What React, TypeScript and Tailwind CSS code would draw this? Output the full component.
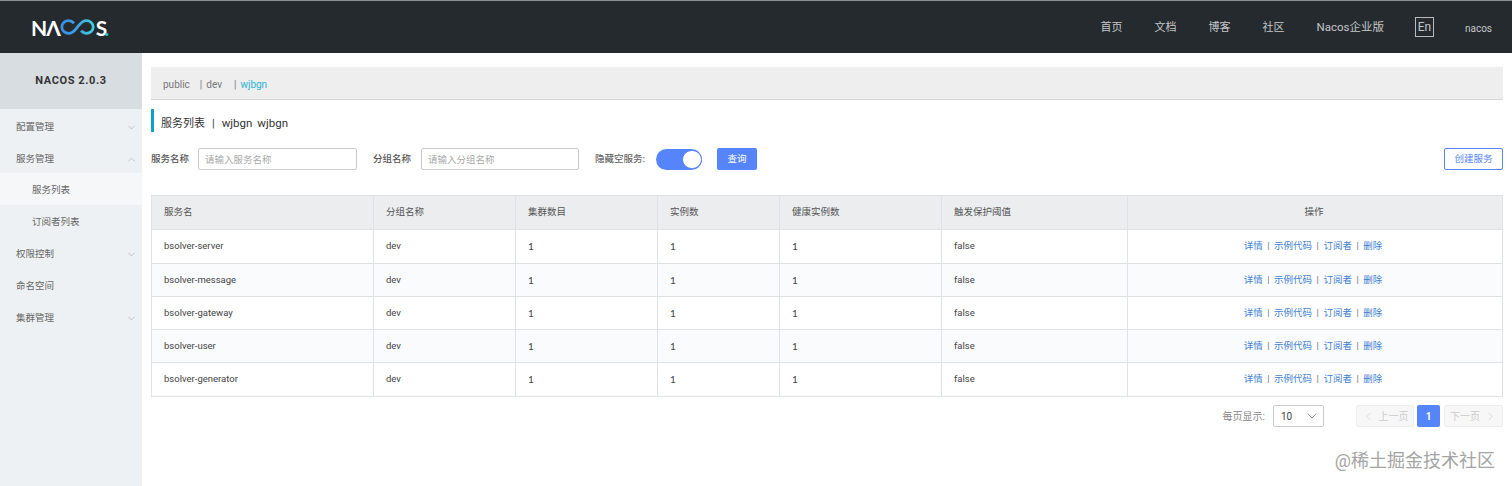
import React from "react";
import { ChevronDown, ChevronUp, ChevronLeft, ChevronRight } from "lucide-react";

const font = "font-['Roboto','Noto_Sans_CJK_SC',sans-serif]";

const rows = ["bsolver-server", "bsolver-message", "bsolver-gateway", "bsolver-user", "bsolver-generator"];
const heights = ["h-[34px]", "h-[33px]", "h-[33px]", "h-[33px]", "h-[34px]"];
const heads = ["服务名", "分组名称", "集群数目", "实例数", "健康实例数", "触发保护阈值"];
const widths = ["w-[222px]", "w-[142px]", "w-[142px]", "w-[122px]", "w-[162px]", "w-[186px]"];

function Logo() {
  return (
    <div className="ml-[31px] flex items-center font-['Lato',sans-serif] text-[21px] leading-none font-bold text-white" aria-label="NACOS.">
      <span className="tracking-[-1px]">NΛ</span>
      <svg width="35" height="16" viewBox="0 0 35 16" fill="none">
        <defs>
          <linearGradient id="inf" x1="0" x2="1">
            <stop offset="0" stopColor="#3a8fe8" />
            <stop offset="0.5" stopColor="#3f9fe6" />
            <stop offset="1" stopColor="#3fd0d8" />
          </linearGradient>
        </defs>
        <path
          d="M14 4.200C12.500 2.600 10.600 1.600 8.600 1.600 4.900 1.600 1.800 4.400 1.800 8s3.100 6.400 6.800 6.400c4.800 0 6.600-4 8.900-6.400S21.600 1.600 26.400 1.600c3.700 0 6.800 2.800 6.800 6.400s-3.100 6.400-6.800 6.400c-2 0-3.900-1-5.400-2.600"
          stroke="url(#inf)"
          strokeWidth="2.8"
        />
      </svg>
      <span className="ml-[1px]">S</span>
      <span className="-ml-[3px] text-[#22c3d6]">.</span>
    </div>
  );
}

function Nav() {
  return (
    <header className="flex h-[53px] items-center justify-between border-t border-[#8b8f93] bg-[#252a2f] pr-5">
      <Logo />
      <nav className="flex items-center text-[11px] text-[#c4c6c8]">
        <span className="mt-[2px] mr-[32px]">首页</span>
        <span className="mt-[2px] mr-[32px]">文档</span>
        <span className="mt-[2px] mr-[32px]">博客</span>
        <span className="mt-[2px] mr-[32px]">社区</span>
        <span className="mt-[2px] mr-[31px] text-[11.5px]">Nacos企业版</span>
        <span className="mr-[31px] flex h-[20px] w-[19px] items-center justify-center border border-[#b9bbbd] text-[12px]">En</span>
        <span className="mt-[2px] text-[10px]">nacos</span>
      </nav>
    </header>
  );
}

function Sidebar() {
  const Item = ({ t, icon, cls = "" }: { t: string; icon?: "down" | "up"; cls?: string }) => (
    <div className={`flex h-8 items-center justify-between pr-[5px] pl-4 text-[9.5px] text-[#666] ${cls}`}>
      <span>{t}</span>
      {icon === "down" && <ChevronDown size={11} strokeWidth={1} className="text-[#888]" />}
      {icon === "up" && <ChevronUp size={11} strokeWidth={1} className="text-[#888]" />}
    </div>
  );
  return (
    <aside className="w-[142px] shrink-0 bg-[#eef1f3]">
      <div className="flex h-[56px] items-center justify-center bg-[#d8dde1] pt-[1px] text-[11px] font-bold tracking-[0.6px] text-[#333]">NACOS 2.0.3</div>
      <Item t="配置管理" icon="down" cls="pt-[4px]" />
      <Item t="服务管理" icon="up" cls="pt-[4px]" />
      <Item t="服务列表" cls="bg-[#f6f7f8] pt-[3px] !pl-[32px]" />
      <Item t="订阅者列表" cls="pt-[2px] !pl-[32px]" />
      <Item t="权限控制" icon="down" cls="mt-[1px]" />
      <Item t="命名空间" />
      <Item t="集群管理" icon="down" />
    </aside>
  );
}

function Table() {
  return (
    <div className="mt-[25px] border border-[#dfe3e6] text-[9.5px] text-[#444]">
      <div className="flex h-[33px] bg-[#ebedef]">
        {heads.map((h, i) => (
          <div key={h} className={`${widths[i]} flex shrink-0 items-center border-r border-[#dfe3e6] pl-[12px] text-[#555]`}>{h}</div>
        ))}
        <div className="flex flex-1 items-center justify-center pr-[2px] text-[#555]">操作</div>
      </div>
      {rows.map((r, idx) => (
        <div key={r} className={`flex ${heights[idx]} border-t border-[#dfe3e6] ${idx % 2 === 1 ? "bg-[#fafbfd]" : "bg-white"}`}>
          {[r, "dev", "1", "1", "1", "false"].map((c, i) => (
            <div key={i} className={`${widths[i]} flex shrink-0 items-center border-r border-[#dfe3e6] pl-[12px] ${c === "1" ? "font-['Lato',sans-serif] text-[10px]" : ""}`}>{c}</div>
          ))}
          <div className="flex flex-1 items-center justify-center gap-[4.5px] pr-[4px] text-[#3f7fd1]">
            <span>详情</span><span className="text-[#777]">|</span><span>示例代码</span><span className="text-[#777]">|</span><span>订阅者</span><span className="text-[#777]">|</span><span>删除</span>
          </div>
        </div>
      ))}
    </div>
  );
}

export default function App() {
  return (
    <div className={`${font} flex h-[486px] w-[1512px] flex-col overflow-hidden bg-white`}>
      <Nav />
      <div className="flex min-h-0 flex-1">
        <Sidebar />
        <main className="relative min-w-0 flex-1 pt-[14px] pr-[9px] pl-[9px]">
          <div className="flex h-[33px] items-center border-b border-[#d6d6d6] bg-[#eeeeee] pt-[3px] pl-3 text-[10px] text-[#777]">
            <span>public</span>
            <span className="ml-[10px]">|</span>
            <span className="ml-[4px]">dev</span>
            <span className="ml-3">|</span>
            <span className="ml-1 text-[#2cb2d0]">wjbgn</span>
          </div>
          <div className="mt-[9px] flex h-[23px] items-center border-l-[3px] border-[#12a3c0] pt-[7px] pl-[7px] text-[11px] text-[#333]">
            <span>服务列表</span>
            <span className="mx-[7px]">|</span>
            <span className="text-[11.5px]">wjbgn</span>
            <span className="ml-[5px] text-[11.5px]">wjbgn</span>
          </div>
          <div className="mt-[16px] flex h-[22px] items-center text-[9.5px]">
            <span className="w-[47px] font-medium text-[#555]">服务名称</span>
            <input readOnly placeholder="请输入服务名称" className="h-[22px] w-[159px] rounded-[2px] border border-[#c9cdd0] px-[6px] text-[9.5px] outline-none placeholder:text-[#aaa]" />
            <span className="ml-[16px] w-[48px] font-medium text-[#555]">分组名称</span>
            <input readOnly placeholder="请输入分组名称" className="h-[22px] w-[158px] rounded-[2px] border border-[#c9cdd0] px-[6px] text-[9.5px] outline-none placeholder:text-[#aaa]" />
            <span className="ml-4 w-[61px] font-medium text-[#666]">隐藏空服务:</span>
            <span className="flex h-[21px] w-[46px] items-center justify-end rounded-full bg-[#5584fb]">
              <span className="h-[19px] w-[20px] rounded-full border border-[#5584fb] bg-white" />
            </span>
            <button className="ml-[15px] h-[22px] w-10 rounded-[2px] bg-[#5584fb] text-[9.5px] text-white">查询</button>
            <button className="ml-auto h-[22px] w-[59px] rounded-[2px] border border-[#5584fb] bg-white text-[9.5px] text-[#5584fb]">创建服务</button>
          </div>
          <Table />
          <div className="mt-[8px] flex items-center justify-end text-[10px] text-[#888]">
            <span>每页显示:</span>
            <div className="mr-[32px] ml-2 flex h-[22px] w-[51px] items-center justify-between rounded-[2px] border border-[#c9cdd0] pr-[3px] pl-[7px] text-[#444]">
              <span>10</span>
              <ChevronDown size={16} strokeWidth={1} className="text-[#666]" />
            </div>
            <div className="flex h-[22px] w-[58px] items-center justify-center gap-1 rounded-[2px] border border-[#eeeeee] bg-[#f7f7f7] text-[#ccc]">
              <ChevronLeft size={13} strokeWidth={1.25} />
              <span>上一页</span>
            </div>
            <div className="mr-[4px] ml-[3px] flex h-[22px] w-[23px] items-center justify-center rounded-[2px] bg-[#5584fb] font-bold text-white">1</div>
            <div className="flex h-[22px] w-[59px] items-center justify-center gap-1 rounded-[2px] border border-[#eeeeee] bg-[#f7f7f7] text-[#ccc]">
              <span>下一页</span>
              <ChevronRight size={13} strokeWidth={1.25} />
            </div>
          </div>
          <div className="absolute right-[17px] bottom-[16px] text-[18px] leading-none text-[#a4a4a4]">@稀土掘金技术社区</div>
        </main>
      </div>
    </div>
  );
}
